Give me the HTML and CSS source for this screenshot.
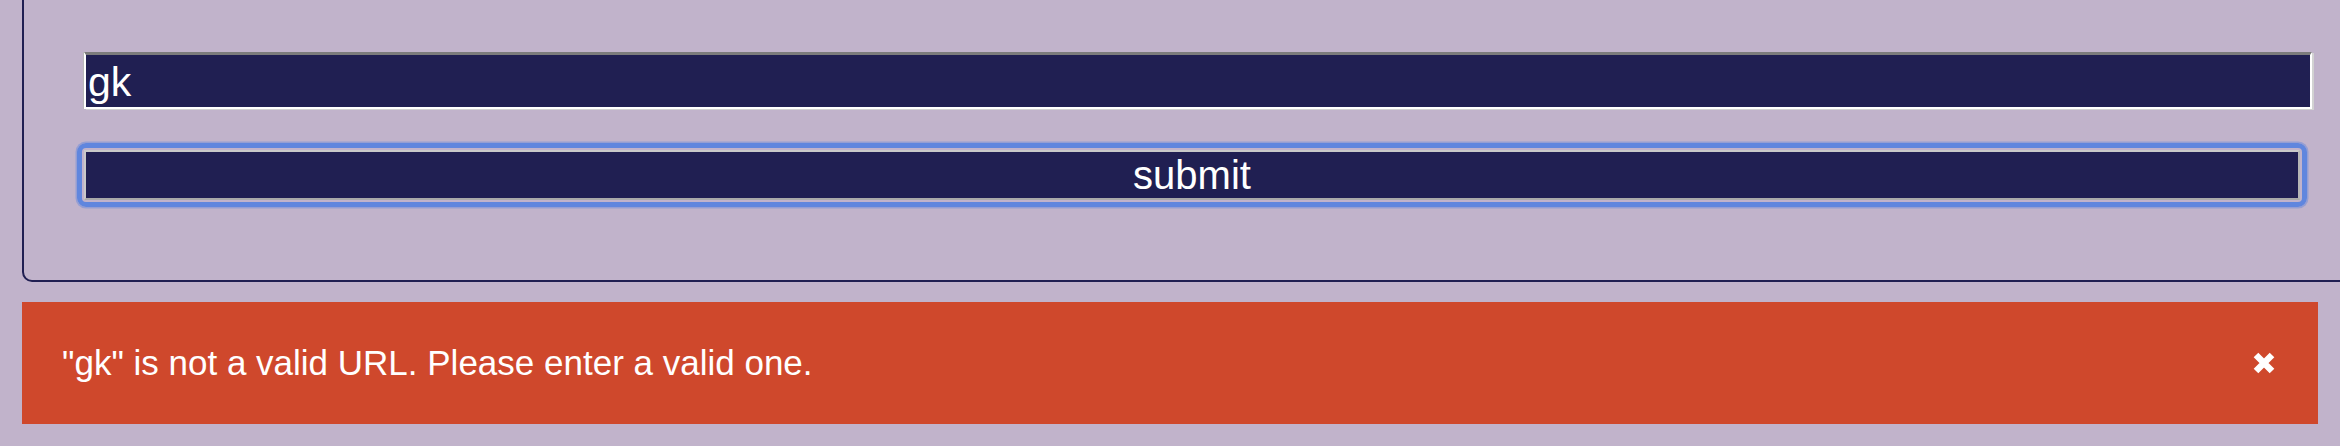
FILE: index.html
```html
<!DOCTYPE html>
<html lang="en">
<head>
<meta charset="utf-8">
<title>URL form</title>
<link rel="stylesheet" href="styles.css">
</head>
<body>
  <main class="page">
    <form class="card">
      <input class="url-input" type="text" value="gk">
      <button class="submit-btn" type="button">submit</button>
    </form>
    <div class="alert">
      <span class="alert-text">"gk" is not a valid URL. Please enter a valid one.</span>
      <button class="alert-close" type="button" aria-label="close">
        <svg width="22" height="22" viewBox="0 0 22 22"><path d="M3 3 L19 19 M19 3 L3 19" stroke="#fff" stroke-width="6.5" stroke-linecap="butt" fill="none"/></svg>
      </button>
    </div>
  </main>
</body>
</html>
```
FILE: styles.css
```css
html, body {
  margin: 0;
  padding: 0;
  overflow: hidden;
}
body {
  background: #c1b3cb;
  font-family: "Liberation Sans", Arial, sans-serif;
  width: 2340px;
  height: 446px;
}
.page {
  padding: 0 22px;
  display: flex;
  flex-direction: column;
}
.card {
  margin-top: -20px;
  margin-right: -56px;
  border: 2px solid #201f52;
  border-radius: 10px;
  padding: 70px 60px 80px 60px;
  display: flex;
  flex-direction: column;
  align-items: flex-start;
}
.url-input {
  box-sizing: border-box;
  width: 2228px;
  height: 57px;
  margin: 0;
  background: #201f52;
  color: #fff;
  font-family: "Liberation Sans", Arial, sans-serif;
  font-size: 41px;
  padding: 3px 2px 0 2px;
  border: 2px solid #fff;
  border-top: 3px solid #7c7c7c;
  box-shadow: -1px 0 0 #b9b9b9, 2px 1px 0 #d2d2d2;
  outline: none;
}
.submit-btn {
  position: relative;
  box-sizing: border-box;
  width: 2216px;
  height: 50px;
  margin: 41px 0 0 0;
  padding: 0;
  background: #201f52;
  color: #fff;
  font-family: "Liberation Sans", Arial, sans-serif;
  font-size: 40px;
  line-height: 46px;
  border: 2px solid #c9c9c9;
  border-bottom-color: #a9a9a9;
  border-right-color: #b5b5b5;
}
.submit-btn::before {
  content: "";
  position: absolute;
  top: -9px;
  left: -9px;
  right: -9px;
  bottom: -9px;
  border: 5px solid #6086de;
  border-radius: 9px;
  box-shadow: 0 0 0 1.5px rgba(96, 134, 222, 0.45);
  pointer-events: none;
}
.alert {
  margin-top: 20px;
  width: 2296px;
  height: 122px;
  box-sizing: border-box;
  background: #cf482c;
  color: #fff;
  display: flex;
  align-items: center;
  justify-content: space-between;
  padding: 0 43px 0 40px;
}
.alert-text {
  font-size: 35px;
}
.alert-close {
  background: none;
  border: none;
  padding: 0;
  margin: 0;
  width: 22px;
  height: 22px;
  display: flex;
}
```
